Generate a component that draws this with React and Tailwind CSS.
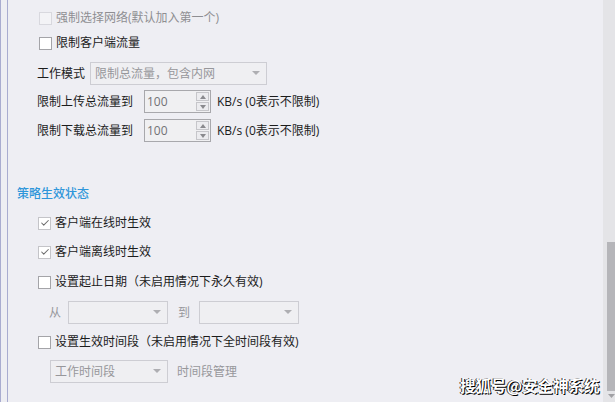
import { Check } from "lucide-react";

function CheckBox({ checked, disabled, label }) {
	return (
		<div className="flex items-center h-[20px] gap-[4px]">
			<div
				className={
					"w-[13px] h-[13px] border flex items-center justify-center " +
					(disabled
						? "border-[#d8d8de] bg-[#f3f3f6]"
						: checked
						? "border-[#c4c4c8] bg-white"
						: "border-[#a4a4a8] bg-white")
				}
			>
				{checked && <Check size={10} strokeWidth={2.5} className="text-[#6b6b6b]" />}
			</div>
			<span className={disabled ? "text-[#8e8e92]" : "text-[#1c1c1c]"}>{label}</span>
		</div>
	);
}

function Combo({ width, text }) {
	return (
		<div
			className={
				"h-[23px] border border-[#cdcdd3] bg-[#efeff2] flex items-center justify-between pl-[4px] pr-[6px] text-[#97979b] " +
				width
			}
		>
			<span>{text}</span>
			<svg width="8" height="5" viewBox="0 0 8 5">
				<path d="M0 0 L8 0 L4 4 Z" fill="#aeaeb2" />
			</svg>
		</div>
	);
}

function SpinBox() {
	return (
		<div className="w-[67px] h-[23px] border border-[#a8a8ac] bg-[#f0f0f2] flex items-center justify-between pl-[2px] pr-[1px]">
			<span className="text-[#727276]">100</span>
			<div className="flex flex-col gap-[1px]">
				<div className="w-[13px] h-[9px] border border-[#c6c6ca] bg-[#ececef] flex items-center justify-center">
					<svg width="6" height="4" viewBox="0 0 6 4">
						<path d="M0 4 L6 4 L3 0 Z" fill="#8a8a8e" />
					</svg>
				</div>
				<div className="w-[13px] h-[9px] border border-[#c6c6ca] bg-[#ececef] flex items-center justify-center">
					<svg width="6" height="4" viewBox="0 0 6 4">
						<path d="M0 0 L6 0 L3 4 Z" fill="#8a8a8e" />
					</svg>
				</div>
			</div>
		</div>
	);
}

export default function App() {
	return (
		<div className="relative w-[615px] h-[402px] overflow-hidden flex bg-[#eeeef3] text-[12px] leading-[16px] font-['Open_Sans','Noto_Sans_CJK_SC',sans-serif]">
			<div className="w-[8px] h-full border-x border-[#a9acd0]" />

			<div className="flex-1 flex flex-col">
				<div className="mt-[8px] ml-[31px]">
					<CheckBox disabled label="强制选择网络(默认加入第一个)" />
				</div>
				<div className="mt-[5px] ml-[31px]">
					<CheckBox label="限制客户端流量" />
				</div>

				<div className="mt-[9px] ml-[29px] flex items-center gap-[5px]">
					<span className="text-[#1c1c1c]">工作模式</span>
					<Combo width="w-[177px]" text="限制总流量，包含内网" />
				</div>
				<div className="mt-[5px] ml-[29px] flex items-center">
					<span className="w-[107px] text-[#1c1c1c]">限制上传总流量到</span>
					<SpinBox />
					<span className="ml-[6px] text-[#1c1c1c]">KB/s (0表示不限制)</span>
				</div>
				<div className="mt-[6px] ml-[29px] flex items-center">
					<span className="w-[107px] text-[#1c1c1c]">限制下载总流量到</span>
					<SpinBox />
					<span className="ml-[6px] text-[#1c1c1c]">KB/s (0表示不限制)</span>
				</div>

				<div className="mt-[44px] ml-[9px] h-[16px] text-[#2f96da] font-medium">策略生效状态</div>

				<div className="mt-[11px] ml-[30px]">
					<CheckBox checked label="客户端在线时生效" />
				</div>
				<div className="mt-[9px] ml-[30px]">
					<CheckBox checked label="客户端离线时生效" />
				</div>
				<div className="mt-[10px] ml-[30px]">
					<CheckBox label="设置起止日期（未启用情况下永久有效)" />
				</div>
				<div className="mt-[9px] ml-[41px] flex items-center">
					<span className="w-[19px] text-[#97979b]">从</span>
					<Combo width="w-[100px]" text="" />
					<span className="ml-[10px] w-[21px] text-[#97979b]">到</span>
					<Combo width="w-[100px]" text="" />
				</div>
				<div className="mt-[8px] ml-[30px]">
					<CheckBox label="设置生效时间段（未启用情况下全时间段有效)" />
				</div>
				<div className="mt-[8px] ml-[42px] flex items-center">
					<Combo width="w-[118px]" text="工作时间段" />
					<span className="ml-[9px] text-[#97979b]">时间段管理</span>
				</div>
			</div>

			<div className="w-[12px] h-full bg-[#e4e4e7] flex flex-col items-end">
				<div className="mt-[242px] w-[8px] h-[149px] bg-[#b5b5b9]" />
				<div className="mt-[3px] w-[8px] flex justify-center">
					<svg width="7" height="4" viewBox="0 0 7 4">
						<path d="M0 0 L7 0 L3.5 4 Z" fill="#a0a0a4" />
					</svg>
				</div>
			</div>

			<div className="absolute left-[460px] top-[375px] text-[15.5px] leading-[20px] font-bold text-white [text-shadow:1px_1px_0_#000,-1px_0_0_#333] font-['Noto_Sans_CJK_SC',sans-serif]">
				搜狐号@安全神系统
			</div>
		</div>
	);
}
